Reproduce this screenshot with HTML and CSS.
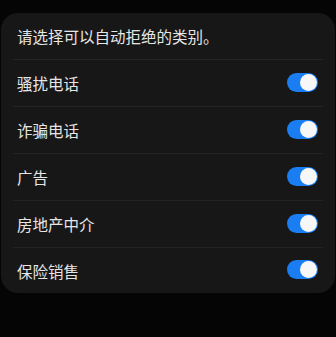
FILE: index.html
```html
<!DOCTYPE html>
<html lang="zh-CN">
<head>
<meta charset="utf-8">
<link rel="stylesheet" href="styles.css">
</head>
<body>
<div class="card">
  <div class="header">请选择可以自动拒绝的类别。</div>
  <div class="row"><span class="label">骚扰电话</span><span class="toggle"><span class="knob"></span></span></div>
  <div class="row"><span class="label">诈骗电话</span><span class="toggle"><span class="knob"></span></span></div>
  <div class="row"><span class="label">广告</span><span class="toggle"><span class="knob"></span></span></div>
  <div class="row"><span class="label">房地产中介</span><span class="toggle"><span class="knob"></span></span></div>
  <div class="row last"><span class="label">保险销售</span><span class="toggle"><span class="knob"></span></span></div>
</div>
</body>
</html>
```
FILE: styles.css
```css
html, body {
  margin: 0;
  padding: 0;
  background: #050505;
  width: 336px;
  height: 337px;
  overflow: hidden;
}
body {
  padding-top: 13px;
  box-sizing: border-box;
  font-family: "Noto Sans CJK SC", "Noto Sans", sans-serif;
}
.card {
  margin: 0 1px;
  background: #171717;
  border-radius: 17px;
  padding: 0 12px;
}
.header {
  height: 47px;
  display: flex;
  align-items: center;
  padding: 0 4px;
  color: #e6e6e6;
  font-size: 15.5px;
  border-bottom: 1px solid #232323;
  box-sizing: border-box;
}
.row {
  height: 47px;
  display: flex;
  align-items: center;
  justify-content: space-between;
  padding: 0 5px 0 4px;
  border-bottom: 1px solid #232323;
  box-sizing: border-box;
}
.row.last {
  border-bottom: none;
  height: 45px;
}
.label {
  color: #e6e6e6;
  font-size: 15.5px;
}
.toggle {
  width: 31px;
  height: 19px;
  border-radius: 10px;
  background: #1a7ef2;
  display: flex;
  align-items: center;
  justify-content: flex-end;
  padding: 0 1px;
  box-sizing: border-box;
  margin-top: -2px;
}
.knob {
  width: 17px;
  height: 17px;
  border-radius: 50%;
  background: #f7f7f7;
}
```
